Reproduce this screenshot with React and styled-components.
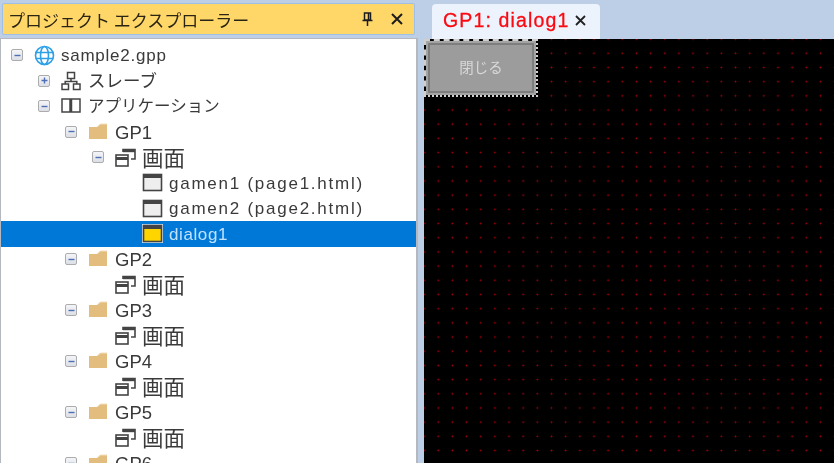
import styled, { createGlobalStyle } from "styled-components";

const GlobalStyle = createGlobalStyle`
  html, body {
    margin: 0;
    padding: 0;
    background: #bccfe6;
    overflow: hidden;
  }
  body {
    font-family: "Liberation Sans", "Noto Sans CJK JP", sans-serif;
  }
`;

const Page = styled.div`
  display: grid;
  grid-template-columns: 418px 1fr;
  column-gap: 6px;
  width: 834px;
  height: 463px;
  overflow: hidden;
  background: #bccfe6;
  filter: blur(0.35px);
`;

const Explorer = styled.section`
  display: flex;
  flex-direction: column;
  min-width: 0;
  height: 463px;
  overflow: hidden;
`;

const TitleBar = styled.header`
  display: flex;
  align-items: center;
  height: 32px;
  margin: 3px 3px 0 2px;
  padding: 0 11px 0 5px;
  box-sizing: border-box;
  background: #ffd768;
  border: 1px solid #9fc0e4;
  border-radius: 2px;
  flex: none;
`;

const Title = styled.h1`
  flex: 1;
  margin: 0;
  font: 400 17px "Noto Sans CJK JP", sans-serif;
  color: #2a2413;
  white-space: pre;
`;

const TitleIcon = styled.svg`
  display: block;
  margin-left: ${(props) => props.$gap || 0}px;
`;

const TreePanel = styled.div`
  flex: 1;
  margin: 3px 0 0 0;
  padding-top: 3.5px;
  background: #fff;
  border: 1px solid #b5b9bf;
  border-right-width: 2px;
  border-bottom: 0;
  overflow: hidden;
`;

const Row = styled.div`
  display: flex;
  align-items: center;
  height: 25.5px;
  padding-left: ${(props) => 10 + props.$level * 27}px;
  background: ${(props) => (props.$selected ? "#0078d7" : "transparent")};
  color: ${(props) => (props.$selected ? "#bfe2ff" : "#3a3a3a")};
  white-space: pre;
`;

const Toggle = styled.span`
  flex: none;
  display: flex;
  align-items: center;
  justify-content: center;
  width: 12px;
  height: 12px;
  margin-right: 10px;
  box-sizing: border-box;
  background: linear-gradient(#f4f5f8, #dcdfe6);
  border: 1.5px solid #acacac;
  border-radius: 2px;
  visibility: ${(props) => (props.$hidden ? "hidden" : "visible")};
`;

const IconSlot = styled.span`
  flex: none;
  display: flex;
  justify-content: center;
  width: 22px;
  margin-right: 6px;
`;

const Label = styled.span`
  position: relative;
  top: ${(props) => (props.$latin ? 1 : -1)}px;
  font-family: ${(props) =>
    props.$latin ? '"Liberation Sans", sans-serif' : '"Noto Sans CJK JP", sans-serif'};
  font-size: ${(props) => props.$size || 17}px;
  letter-spacing: ${(props) => props.$spacing || 0}px;
`;

const Workspace = styled.section`
  display: flex;
  flex-direction: column;
  min-width: 0;
  height: 463px;
`;

const TabStrip = styled.div`
  display: flex;
  flex: none;
  height: 39px;
  padding: 4px 0 0 8px;
  box-sizing: border-box;
`;

const Tab = styled.div`
  display: flex;
  align-items: center;
  gap: 5px;
  width: 168px;
  padding: 0 10px 2px 11px;
  box-sizing: border-box;
  background: #edf3fc;
  border-radius: 4px 4px 0 0;
`;

const TabTitle = styled.span`
  font: 400 19.5px "Liberation Sans", sans-serif;
  -webkit-text-stroke: 0.3px #fa0a12;
  letter-spacing: 1.15px;
  color: #fa0a12;
  white-space: pre;
`;

const Canvas = styled.div`
  flex: 1;
  background-color: #000;
  background-image: radial-gradient(circle at 50% 50%, #a8000a 0, #900008 0.8px, transparent 1.1px);
  background-size: 14.17px 14.2px;
  background-position: -7px -7px;
`;

const DialogFrame = styled.div`
  width: 114px;
  height: 58px;
  padding: 1px;
  box-sizing: border-box;
  border-width: 2px;
  border-style: dashed dotted dotted dashed;
  border-color: #cfcfcf;
  background: #000;
`;

const CloseButton = styled.button`
  display: block;
  width: 100%;
  height: 100%;
  padding: 0 0 4px;
  background: #9c9c9c;
  border: 3px solid #7e7e7e;
  outline: 2px solid #a4a4a4;
  outline-offset: -1px;
  color: #d8d8d8;
  font: 400 14.5px "Noto Sans CJK JP", sans-serif;
`;

const MinusGlyph = () => (
  <svg width="7" height="7" viewBox="0 0 7 7">
    <path d="M0.5 3.5h6" stroke="#4f6fb5" strokeWidth="1.4" />
  </svg>
);

const PlusGlyph = () => (
  <svg width="7" height="7" viewBox="0 0 7 7">
    <path d="M0.5 3.5h6M3.5 0.5v6" stroke="#4f6fb5" strokeWidth="1.4" />
  </svg>
);

const GlobeIcon = () => (
  <svg width="21" height="21" viewBox="0 0 21 21" fill="none" stroke="#2ea0e8" strokeWidth="1.6">
    <circle cx="10.5" cy="10.5" r="9" />
    <ellipse cx="10.5" cy="10.5" rx="4" ry="9" />
    <path d="M1.5 7.5h18M1.5 13.5h18" />
  </svg>
);

const NetworkIcon = () => (
  <svg width="20" height="20" viewBox="0 0 20 20" fill="none" stroke="#444" strokeWidth="1.5">
    <rect x="6.5" y="1.5" width="7" height="6" />
    <rect x="1" y="13" width="6.5" height="5.5" />
    <rect x="12.5" y="13" width="6.5" height="5.5" />
    <path d="M10 7.5v3M4.2 13v-2.5h11.6V13" />
  </svg>
);

const BookIcon = () => (
  <svg width="20" height="18" viewBox="0 0 20 18" fill="none" stroke="#444" strokeWidth="1.5">
    <path d="M1 2h8v13H1zM10.500 2H19v13h-8.500z" />
  </svg>
);

const FolderIcon = () => (
  <svg width="20" height="18" viewBox="0 0 20 18">
    <path d="M1 4h8l3-3h7v15H1z" fill="#e2bd7d" />
    <path d="M10 3.500l2.500-2.500H19" fill="none" stroke="#f3dfb9" strokeWidth="1" />
  </svg>
);

const ScreensIcon = () => (
  <svg width="21" height="19" viewBox="0 0 21 19" fill="none" stroke="#444" strokeWidth="1.6">
    <rect x="1" y="7" width="12" height="11" />
    <path d="M1 10.500h12" strokeWidth="3" />
    <path d="M8 4V1.500h12V11h-4" />
    <path d="M8 3h12" strokeWidth="2.400" />
  </svg>
);

const WindowIcon = ({ fill = "#eeeeee", halo = false }) => (
  <svg width="21" height="19" viewBox="0 0 21 19">
    {halo && <rect x="0" y="0" width="21" height="19" fill="#d8e8f6" />}
    <rect x="1.500" y="1.500" width="18" height="16" fill={fill} stroke="#444" strokeWidth="1.600" />
    <rect x="1.500" y="1.500" width="18" height="3.500" fill="#444" />
  </svg>
);

const groups = ["GP2", "GP3", "GP4", "GP5"];

function ExplorerRow({ level, toggle, icon, selected, children, ...label }) {
  return (
    <Row $level={level} $selected={selected}>
      <Toggle $hidden={!toggle}>{toggle === "plus" ? <PlusGlyph /> : <MinusGlyph />}</Toggle>
      <IconSlot>{icon}</IconSlot>
      <Label $latin={label.latin} $size={label.size} $spacing={label.spacing}>
        {children}
      </Label>
    </Row>
  );
}

const ScreensLabel = "画面";

export default function App() {
  return (
    <Page>
      <GlobalStyle />
      <Explorer>
        <TitleBar>
          <Title>プロジェクト エクスプローラー</Title>
          <TitleIcon width="11" height="14" viewBox="0 0 11 14">
            <path d="M2.500 1h6v7h-6zM0.500 8.500h10M5.500 9v5M6.500 1.500v6" fill="none" stroke="#1c1c1c" strokeWidth="1.500" />
          </TitleIcon>
          <TitleIcon $gap={18} width="12" height="12" viewBox="0 0 12 12">
            <path d="M1 1l10 10M11 1L1 11" stroke="#1c1c1c" strokeWidth="2" />
          </TitleIcon>
        </TitleBar>
        <TreePanel>
          <ExplorerRow level={0} toggle="minus" icon={<GlobeIcon />} latin size={17} spacing={0.75}>sample2.gpp</ExplorerRow>
          <ExplorerRow level={1} toggle="plus" icon={<NetworkIcon />} size={17.5}>スレーブ</ExplorerRow>
          <ExplorerRow level={1} toggle="minus" icon={<BookIcon />} size={16.5}>アプリケーション</ExplorerRow>
          <ExplorerRow level={2} toggle="minus" icon={<FolderIcon />} latin size={18.5}>GP1</ExplorerRow>
          <ExplorerRow level={3} toggle="minus" icon={<ScreensIcon />} size={21.5}>{ScreensLabel}</ExplorerRow>
          <ExplorerRow level={4} icon={<WindowIcon />} latin size={17} spacing={1.75}>gamen1 (page1.html)</ExplorerRow>
          <ExplorerRow level={4} icon={<WindowIcon />} latin size={17} spacing={1.75}>gamen2 (page2.html)</ExplorerRow>
          <ExplorerRow level={4} icon={<WindowIcon fill="#ffd500" halo />} latin size={17} spacing={0.6} selected>dialog1</ExplorerRow>
          {groups.map((name) => (
            <div key={name}>
              <ExplorerRow level={2} toggle="minus" icon={<FolderIcon />} latin size={18.5}>{name}</ExplorerRow>
              <ExplorerRow level={3} icon={<ScreensIcon />} size={21.5}>{ScreensLabel}</ExplorerRow>
            </div>
          ))}
          <ExplorerRow level={2} toggle="minus" icon={<FolderIcon />} latin size={18.5}>GP6</ExplorerRow>
        </TreePanel>
      </Explorer>
      <Workspace>
        <TabStrip>
          <Tab>
            <TabTitle>GP1: dialog1</TabTitle>
            <svg width="11" height="11" viewBox="0 0 11 11">
              <path d="M1 1l9 9M10 1l-9 9" stroke="#222" strokeWidth="1.800" />
            </svg>
          </Tab>
        </TabStrip>
        <Canvas>
          <DialogFrame>
            <CloseButton>閉じる</CloseButton>
          </DialogFrame>
        </Canvas>
      </Workspace>
    </Page>
  );
}
